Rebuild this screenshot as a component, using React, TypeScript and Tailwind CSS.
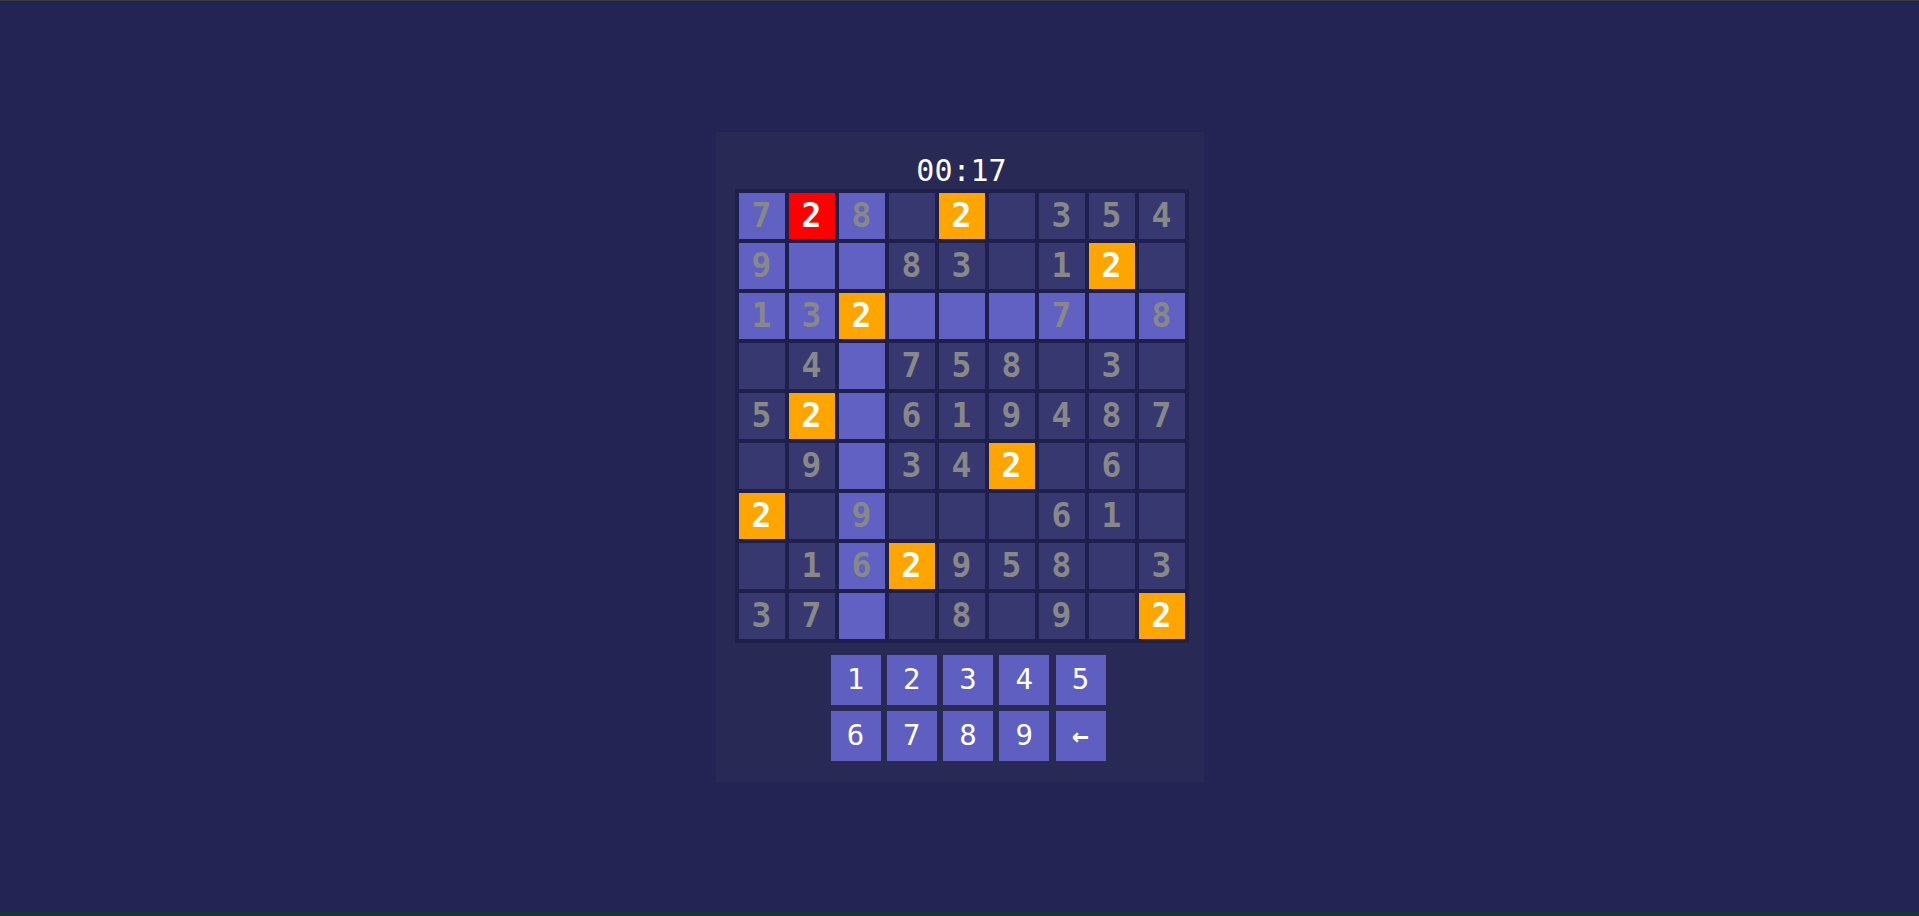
import React from "react";

type Cell = { v: string; t: "d" | "h" | "o" | "r" };

const raw: string[][] = [
  ["7h", "2r", "8h", "d", "2o", "d", "3d", "5d", "4d"],
  ["9h", "h", "h", "8d", "3d", "d", "1d", "2o", "d"],
  ["1h", "3h", "2o", "h", "h", "h", "7h", "h", "8h"],
  ["d", "4d", "h", "7d", "5d", "8d", "d", "3d", "d"],
  ["5d", "2o", "h", "6d", "1d", "9d", "4d", "8d", "7d"],
  ["d", "9d", "h", "3d", "4d", "2o", "d", "6d", "d"],
  ["2o", "d", "9h", "d", "d", "d", "6d", "1d", "d"],
  ["d", "1d", "6h", "2o", "9d", "5d", "8d", "d", "3d"],
  ["3d", "7d", "h", "d", "8d", "d", "9d", "d", "2o"],
];

const grid: Cell[][] = raw.map((r) =>
  r.map((s) => {
    const t = s[s.length - 1] as Cell["t"];
    return { v: s.length > 1 ? s[0] : "", t };
  })
);

function cellClass(t: Cell["t"]) {
  switch (t) {
    case "h":
      return "bg-[#6161c4] text-[#888888]";
    case "o":
      return "bg-[#ffa500] text-white";
    case "r":
      return "bg-[#ff0000] text-white";
    default:
      return "bg-[#383871] text-[#888888]";
  }
}

const mono = { fontFamily: '"DejaVu Sans Mono", "Liberation Mono", monospace' };

export default function App() {
  const keys1 = ["1", "2", "3", "4", "5"];
  const keys2 = ["6", "7", "8", "9", "←"];
  return (
    <div
      className="flex h-[916px] w-full flex-col bg-[#232453]"
      style={mono}
    >
      <div className="h-px w-full bg-[#3c3c44]" />
      <div className="flex flex-1 items-center justify-center">
        <div className="flex flex-col bg-[#282955] pb-[21px] pl-[19px] pr-[15px] pt-[22px]">
          <div className="flex h-[35px] items-center justify-center text-[30px] leading-none text-white">
            00:17
          </div>
          <div className="grid w-[454px] grid-cols-9 gap-[4px] bg-[#1f1f4b] p-[4px]">
            {grid.flat().map((c, i) => (
              <div
                key={i}
                className={`flex h-[46px] w-[46px] items-center justify-center text-[33px] font-bold leading-none ${cellClass(
                  c.t
                )}`}
              >
                {c.v}
              </div>
            ))}
          </div>
          <div className="mt-[12px] flex flex-col gap-[6px] pl-[96px]">
            {[keys1, keys2].map((row, ri) => (
              <div key={ri} className="flex gap-[6.25px]">
                {row.map((k) => (
                  <div
                    key={k}
                    className={`flex h-[50px] w-[50px] items-center justify-center bg-[#5f5fc2] leading-none text-white ${
                      k === "←" ? "text-[28px] font-bold" : "text-[29px]"
                    }`}
                  >
                    {k}
                  </div>
                ))}
              </div>
            ))}
          </div>
        </div>
      </div>
      <div className="h-[4px] w-full bg-[#1a3334]" />
    </div>
  );
}
